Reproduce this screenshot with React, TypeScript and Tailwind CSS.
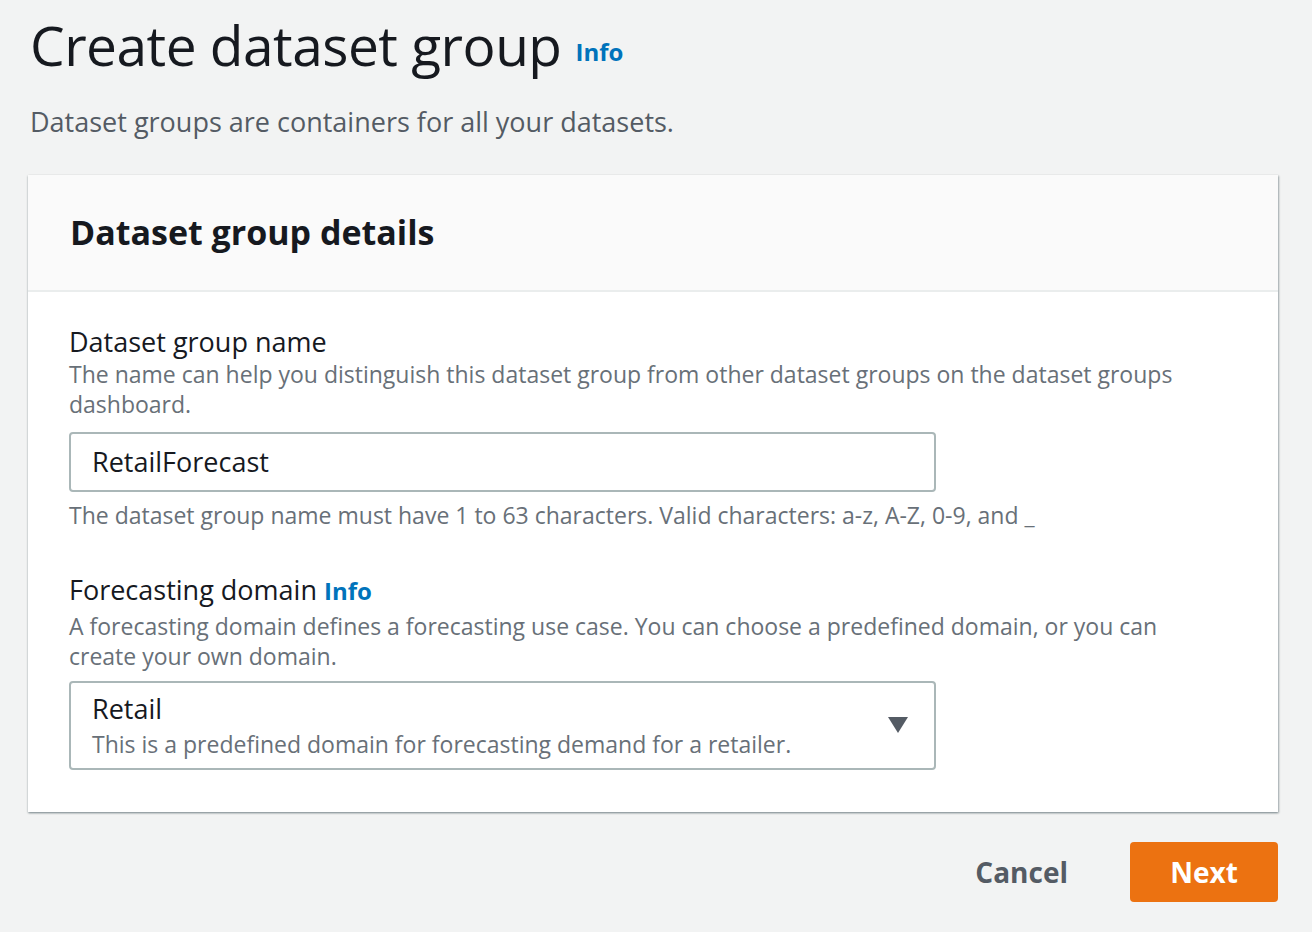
export default function App() {
  return (
    <div
      className="min-h-[932px] w-[1312px] bg-[#f2f3f3] text-[#16191f] px-[28px] pt-[10px]"
      style={{ fontFamily: '"Open Sans", "Noto Sans", sans-serif' }}
    >
      {/* Page header */}
      <div className="flex items-center gap-[14px] pl-[2px]">
        <h1 className="text-[55px] leading-[70px] font-normal tracking-[-0.5px]">Create dataset group</h1>
        <a className="pt-[14px] text-[24px] font-bold text-[#0073bb]">Info</a>
      </div>
      <p className="mt-[26px] pl-[2px] text-[27px] leading-[32px] text-[#545b64]">
        Dataset groups are containers for all your datasets.
      </p>

      {/* Card */}
      <div className="mt-[37px] w-[1250px] bg-white shadow-[0_1px_2px_0_rgba(0,28,36,0.35),1px_1px_2px_0_rgba(0,28,36,0.25)]">
        <div className="h-[117px] flex items-center px-[42px] bg-[#fafafa] border-b-2 border-[#eaeded]">
          <h2 className="text-[34px] font-bold">Dataset group details</h2>
        </div>
        <div className="pl-[41px] pr-[20px] pt-[33px] pb-[42px]">
          <div className="text-[27px] leading-[34px]">Dataset group name</div>
          <p className="max-w-[1130px] text-[23px] leading-[30px] text-[#687078]">
            The name can help you distinguish this dataset group from other dataset groups on the dataset groups dashboard.
          </p>
          <div className="mt-[13px] w-[867px] h-[60px] rounded border-2 border-[#aab7b8] flex items-center px-[21px] text-[27px]">
            RetailForecast
          </div>
          <p className="mt-[8px] text-[23px] leading-[30px] text-[#687078]">
            The dataset group name must have 1 to 63 characters. Valid characters: a-z, A-Z, 0-9, and _
          </p>

          <div className="mt-[43px] mb-[3px] text-[27px] leading-[34px]">
            Forecasting domain <a className="text-[24px] font-bold text-[#0073bb]">Info</a>
          </div>
          <p className="max-w-[1130px] text-[23px] leading-[30px] text-[#687078]">
            A forecasting domain defines a forecasting use case. You can choose a predefined domain, or you can create your own domain.
          </p>
          <div className="mt-[10px] w-[867px] h-[89px] rounded border-2 border-[#aab7b8] flex items-center pl-[21px] pr-[26px]">
            <div className="flex-1">
              <div className="text-[27px] leading-[36px]">Retail</div>
              <div className="text-[23px] leading-[34px] text-[#687078]">
                This is a predefined domain for forecasting demand for a retailer.
              </div>
            </div>
            <svg width="20" height="16" viewBox="0 0 20 16" className="mb-[2px]">
              <path d="M0 0 H20 L10 16 Z" fill="#545b64" />
            </svg>
          </div>
        </div>
      </div>

      {/* Actions */}
      <div className="mt-[30px] w-[1250px] flex justify-end items-center gap-[62px]">
        <button className="text-[28px] font-bold text-[#545b64]">Cancel</button>
        <button className="w-[148px] h-[60px] rounded bg-[#ec7211] text-white text-[28px] font-bold">Next</button>
      </div>
    </div>
  )
}
